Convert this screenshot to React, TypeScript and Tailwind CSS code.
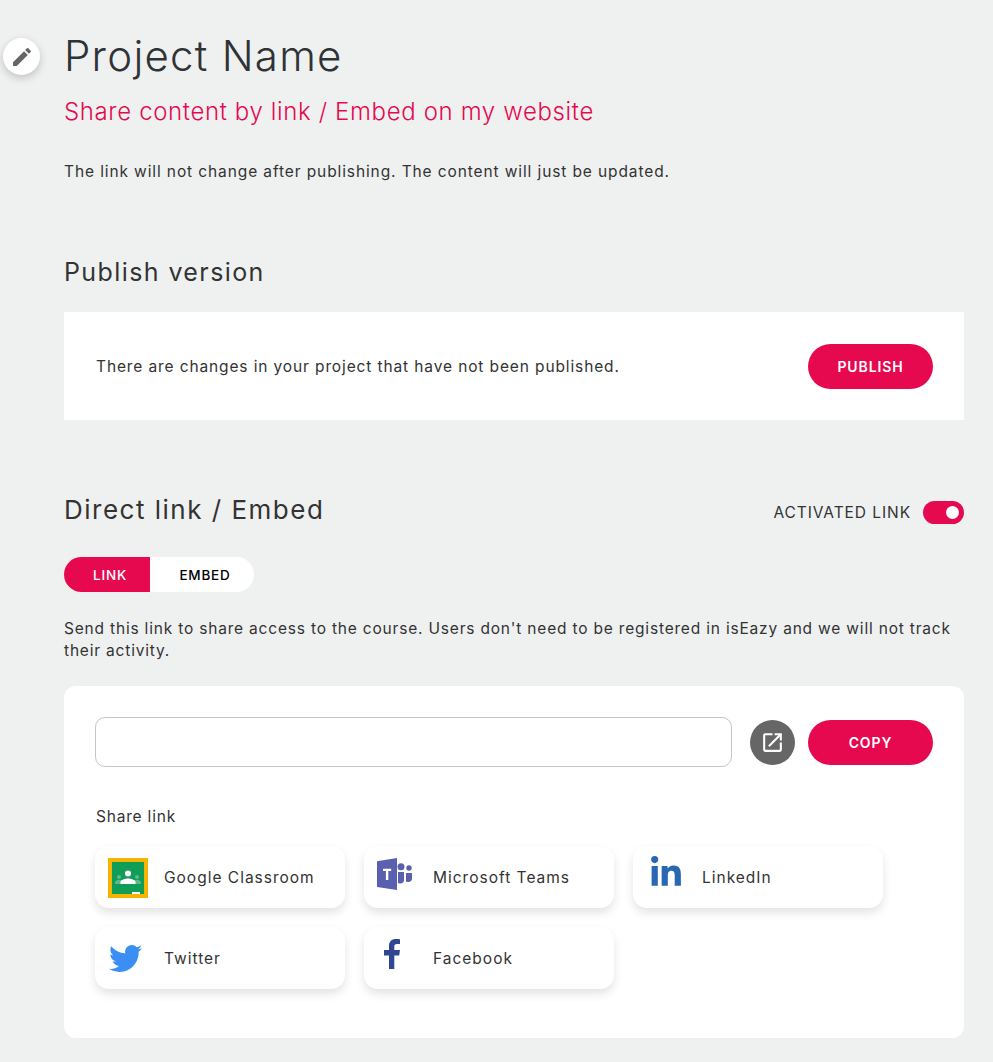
import React from 'react';
import { MdEdit, MdOpenInNew } from 'react-icons/md';
import { FaTwitter, FaLinkedinIn } from 'react-icons/fa';

const ClassroomIcon = () => (
  <svg width="40" height="40" viewBox="0 0 40 40">
    <rect width="40" height="40" fill="#f4b400" />
    <rect x="4" y="4" width="32" height="32" fill="#0f9d58" />
    <circle cx="11" cy="19" r="2" fill="#57bb8a" />
    <circle cx="29" cy="19" r="2" fill="#57bb8a" />
    <path d="M7 26v-1.500c0-1.700 2.500-2.700 4-2.700s4 1 4 2.700V26zM25 26v-1.500c0-1.700 2.500-2.700 4-2.700s4 1 4 2.700V26z" fill="#57bb8a" />
    <circle cx="20" cy="15.500" r="3" fill="#fff" />
    <path d="M12.500 26v-2c0-2.400 4.600-3.600 7.500-3.600s7.500 1.200 7.500 3.600v2z" fill="#fff" />
    <rect x="24" y="34" width="8" height="2" fill="#fff" />
  </svg>
);

const TeamsIcon = () => (
  <svg width="36" height="32" viewBox="0 0 36 32">
    <circle cx="24" cy="8.700" r="3.500" fill="#5b5fb0" />
    <circle cx="32" cy="10" r="2.700" fill="#5b5fb0" />
    <path d="M21 14h6v8c0 2-1.500 3.500-3.500 3.500-.9 0-1.800-.2-2.500-.6z" fill="#5b5fb0" />
    <path d="M29 15h6v5.500c0 2-1.500 3.500-3.500 3.500-.9 0-1.800-.2-2.500-.6z" fill="#5b5fb0" />
    <path d="M0 3.200 20 0v32L0 29z" fill="#5b5fb0" />
    <path d="M6 10.700h8.200v2.300h-2.900v9H8.900v-9H6z" fill="#fff" />
  </svg>
);

const FacebookIcon = () => (
  <svg width="16" height="30" viewBox="0 0 16 30" className="ml-[7px]">
    <path d="M5 30V16.500H0V11h5V7c0-4.500 2.700-7 6.800-7 2 0 3.700.15 4.200.2V5h-2.900C10.800 5 10.300 6.100 10.300 7.700V11H16l-.8 5.500h-4.900V30z" fill="#2f4690" />
  </svg>
);

const shareItems = [
  { label: 'Google Classroom', icon: <ClassroomIcon /> },
  { label: 'Microsoft Teams', icon: <TeamsIcon /> },
  { label: 'LinkedIn', icon: <FaLinkedinIn size={34} className="ml-[3px] mt-[-2px] text-[#2867b2]" /> },
  { label: 'Twitter', icon: <FaTwitter size={33} className="ml-[1px] mt-[3px] text-[#3b8ff3]" /> },
  { label: 'Facebook', icon: <FacebookIcon /> },
];

const App: React.FC = () => {
  return (
    <div className="relative h-[1062px] overflow-hidden bg-[#eff1f1] pl-[64px] pr-[29px] font-['Inter',sans-serif] text-[#333]">
      <button className="absolute left-[3px] top-[38px] flex h-[37px] w-[37px] items-center justify-center rounded-full bg-white text-[#666] shadow-[0_3px_8px_rgba(0,0,0,0.2)]">
        <MdEdit size={24} />
      </button>

      <h1 className="pt-[29px] text-[42px] leading-[54px] font-light tracking-[1.25px] text-[#2f3336]">Project Name</h1>
      <h2 className="mt-[14px] text-[24px] leading-[30px] font-light tracking-[0.63px] text-[#e6094f]">Share content by link / Embed on my website</h2>
      <p className="mt-[34px] text-[15.5px] leading-[22px] tracking-[0.89px]">The link will not change after publishing. The content will just be updated.</p>

      <h3 className="mt-[73px] text-[25px] leading-[32px] tracking-[1.4px]">Publish version</h3>
      <div className="mt-[24px] flex h-[108px] items-center justify-between bg-white pl-[32px] pr-[31px]">
        <p className="pt-[2px] text-[15.5px] tracking-[0.88px]">There are changes in your project that have not been published.</p>
        <button className="h-[45px] w-[125px] rounded-full bg-[#e6094f] text-[14px] font-semibold tracking-[0.9px] text-white">PUBLISH</button>
      </div>

      <div className="mt-[74px] flex items-center justify-between">
        <h3 className="text-[26px] leading-[32px] tracking-[1.5px]">Direct link / Embed</h3>
        <div className="mt-[4px] flex items-center gap-[12px]">
          <span className="pt-[2px] text-[15.5px] tracking-[0.93px]">ACTIVATED LINK</span>
          <span className="relative h-[23px] w-[41px] rounded-full bg-[#e6094f]">
            <span className="absolute right-[5px] top-[5px] h-[13px] w-[13px] rounded-full bg-white" />
          </span>
        </div>
      </div>

      <div className="mt-[31px] flex h-[35px] w-[190px] overflow-hidden rounded-full bg-white text-[13.5px] font-medium tracking-[0.8px]">
        <span className="flex w-[86px] items-center justify-center bg-[#e6094f] pl-[6px] pt-[1px] text-white">LINK</span>
        <span className="flex w-[104px] items-center justify-center pl-[6px] pt-[1px] text-black">EMBED</span>
      </div>

      <p className="mt-[26px] text-[15.5px] leading-[22px] tracking-[0.81px]">Send this link to share access to the course. Users don't need to be registered in isEazy and we will not track their activity.</p>

      <div className="mt-[24px] h-[352px] rounded-[12px] bg-white pl-[31px] pr-[31px] pt-[31px]">
        <div className="flex items-center">
          <div className="h-[50px] w-[637px] rounded-[10px] border border-[#c4c4c4]" />
          <button className="ml-[18px] flex h-[45px] w-[45px] items-center justify-center rounded-full bg-[#666] text-white">
            <MdOpenInNew size={25} />
          </button>
          <button className="ml-[13px] h-[45px] w-[125px] rounded-full bg-[#e6094f] text-[14px] font-semibold tracking-[0.9px] text-white">COPY</button>
        </div>

        <p className="mt-[40px] pl-[1px] text-[15.5px] leading-[20px] tracking-[0.8px]">Share link</p>

        <div className="mt-[19px] grid grid-cols-[250px_250px_250px] gap-[19px]">
          {shareItems.map((item) => (
            <div key={item.label} className="relative flex h-[62px] items-center rounded-[14px] bg-white pl-[69px] pt-[2px] shadow-[0_5px_10px_rgba(0,0,0,0.11)]">
              <span className="absolute left-[13px] top-[12px] flex">{item.icon}</span>
              <span className="text-[15.5px] tracking-[1px]">{item.label}</span>
            </div>
          ))}
        </div>
      </div>
    </div>
  );
};

export default App;
